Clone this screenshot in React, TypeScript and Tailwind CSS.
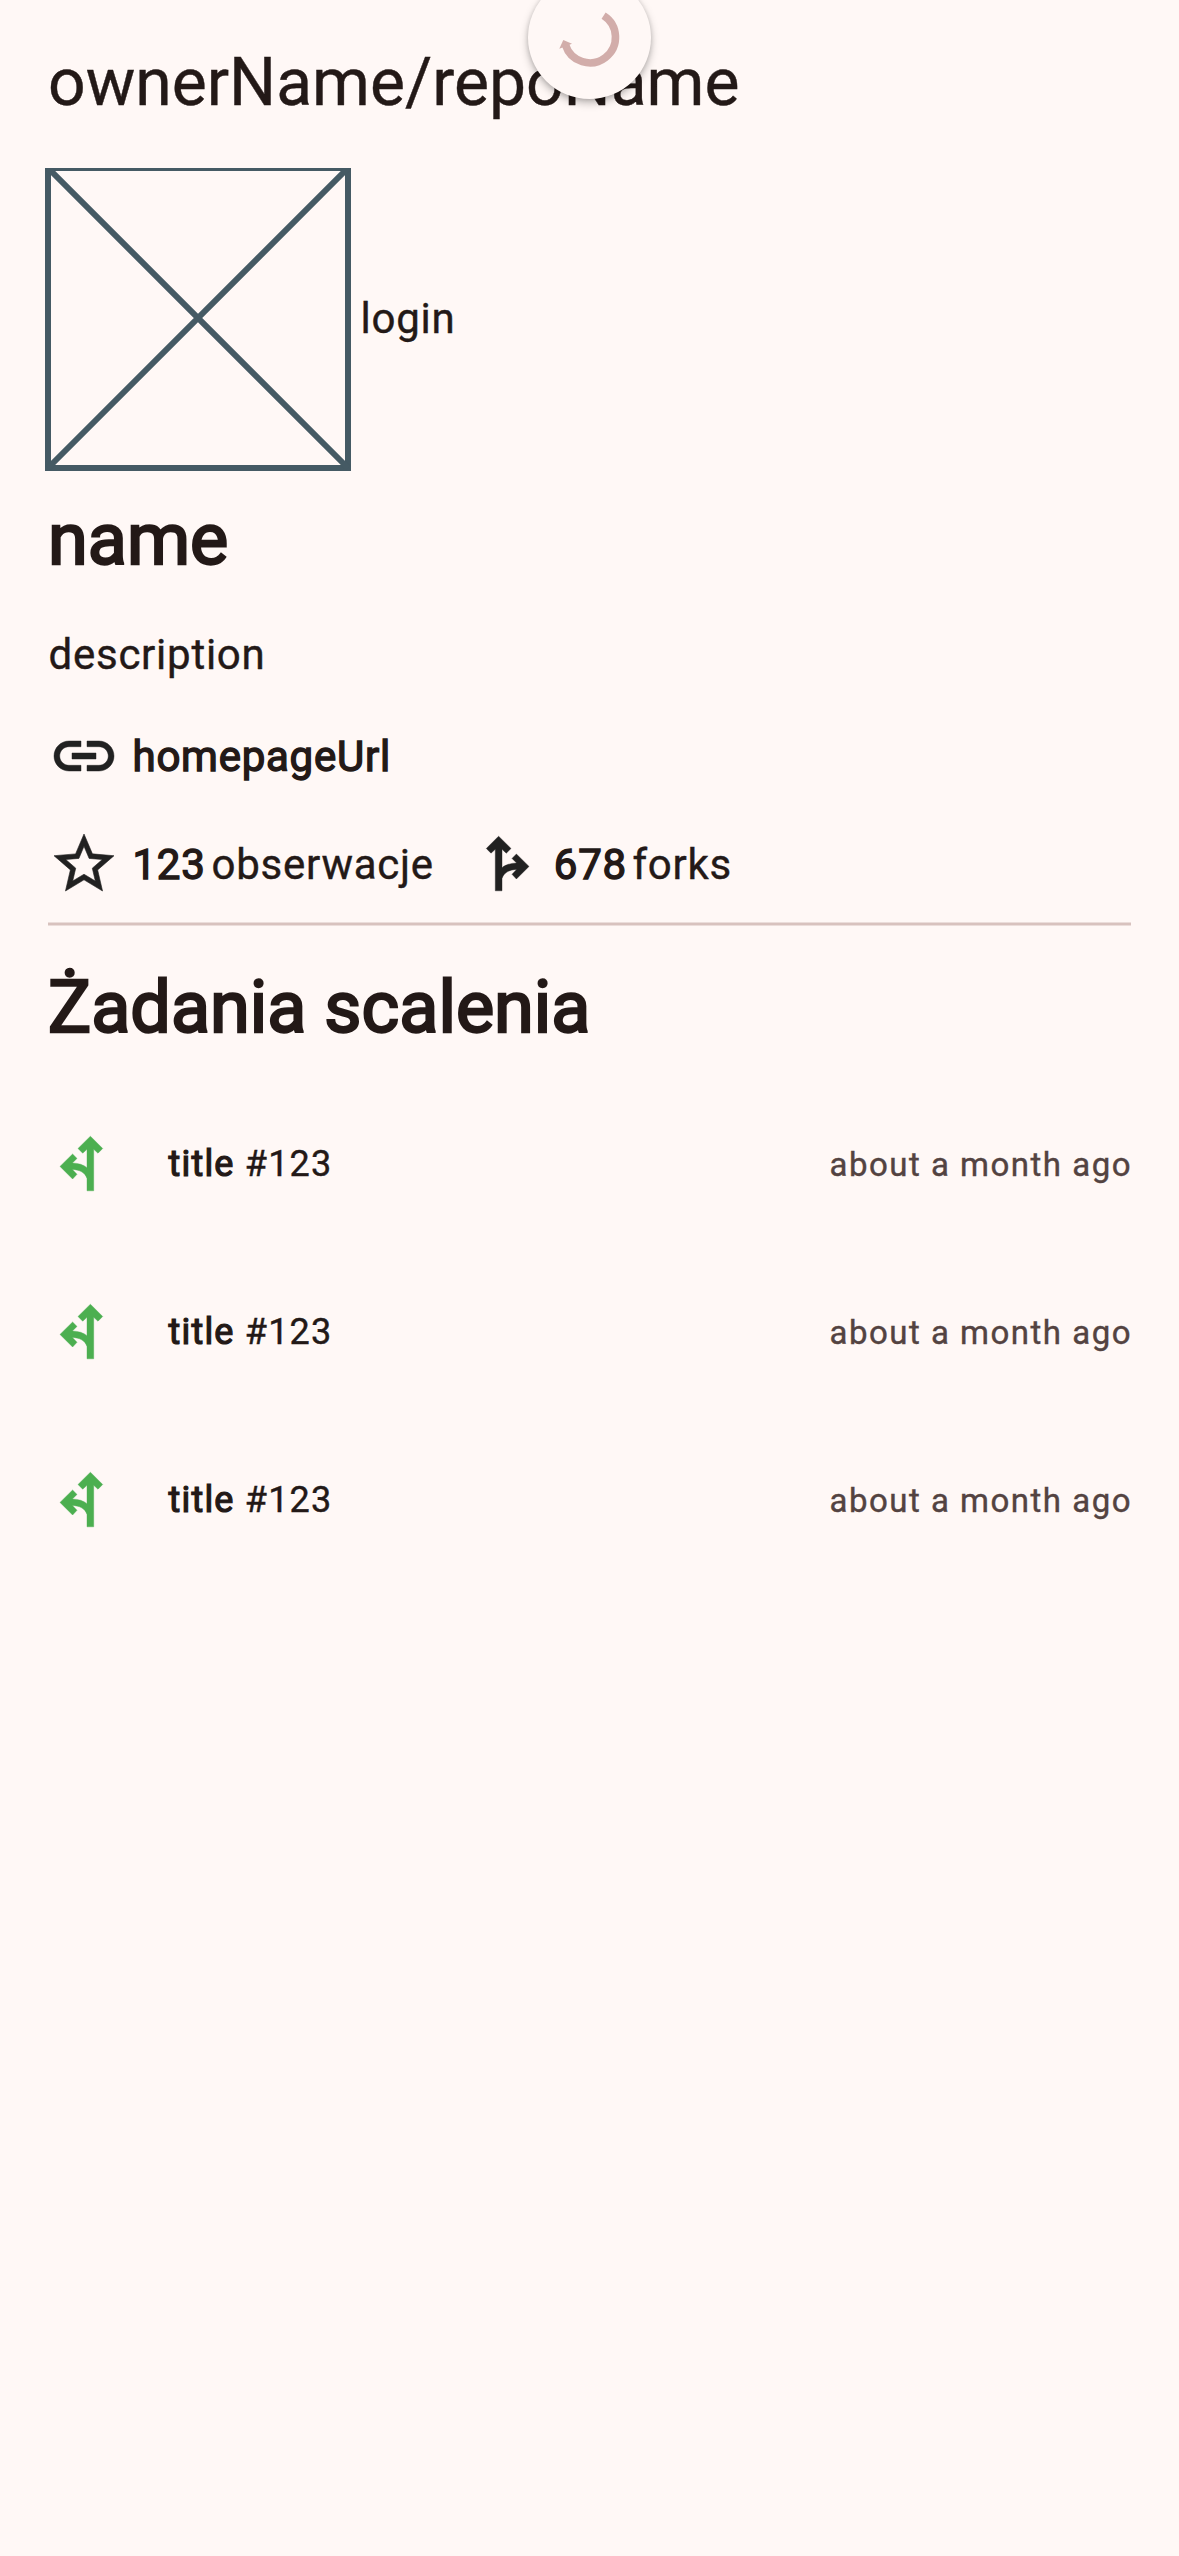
import React from "react";

const pullRequests = [
  { title: "title", number: "#123", updated: "about a month ago" },
  { title: "title", number: "#123", updated: "about a month ago" },
  { title: "title", number: "#123", updated: "about a month ago" },
];

function AvatarPlaceholder() {
  return (
    <svg className="h-[303px] w-[306px] shrink-0" viewBox="-3 0 306 303" fill="none" stroke="#455a64" strokeWidth="6">
      <rect x="0" y="0" width="300" height="300" />
      <path d="M0 0L300 300M300 0L0 300" />
    </svg>
  );
}

function LinkIcon({ className }: { className?: string }) {
  return (
    <svg className={className} viewBox="0 0 24 24" fill="currentColor" stroke="currentColor" strokeWidth="0.15">
      <path d="M3.9 12c0-1.71 1.39-3.1 3.1-3.1h4V7H7c-2.76 0-5 2.24-5 5s2.24 5 5 5h4v-1.9H7c-1.71 0-3.1-1.39-3.1-3.1zM8 13h8v-2H8v2zm9-6h-4v1.9h4c1.71 0 3.1 1.39 3.1 3.1s-1.39 3.1-3.1 3.1h-4V17h4c2.76 0 5-2.24 5-5s-2.24-5-5-5z" />
    </svg>
  );
}

function StarIcon({ className }: { className?: string }) {
  return (
    <svg className={className} viewBox="0 0 24 24" fill="currentColor" stroke="currentColor" strokeWidth="0.2" strokeLinejoin="bevel">
      <path d="M22 9.24l-7.19-.62L12 2 9.19 8.63 2 9.24l5.46 4.73L5.82 21 12 17.27 18.18 21l-1.63-7.03L22 9.24zM12 15.4l-3.76 2.27 1-4.28-3.32-2.88 4.38-.38L12 6.1l1.71 4.04 4.38.38-3.32 2.88 1 4.28L12 15.4z" />
    </svg>
  );
}

function ForkIcon({ className }: { className?: string }) {
  return (
    <svg className={className} viewBox="0 0 72 72" fill="currentColor" stroke="currentColor" strokeWidth="0.4">
      <path d="M29.6 8.2L17.3 20.5L22 25.2L26.3 21.3V62.8H33V50.5C35 44.5 40.5 41.7 47.6 41.5L43 46.3L47.4 51L60 38.4L47.4 26L43 30.4L47.6 35C41.5 35.2 36.5 36.7 33 39.7V21.3L37.3 25.2L42 20.5Z" />
    </svg>
  );
}

function RefreshIndicator() {
  return (
    <div className="absolute -top-6 left-[528px] h-[123px] w-[123px] rounded-full bg-[#fff8f6] shadow-[0_4px_8px_rgba(0,0,0,0.26),0_1px_4px_rgba(0,0,0,0.12)]">
      <svg className="h-full w-full" viewBox="0 0 123 123">
        <path d="M75.6 39.6A25.6 25.6 0 1 1 37.5 69" fill="none" stroke="#d2adaa" strokeWidth="7.6" />
        <path d="M31.3 72.7L35.3 64L44 67.7Z" fill="#d2adaa" />
      </svg>
    </div>
  );
}

export default function App() {
  return (
    <div className="relative h-[2556px] w-[1179px] overflow-hidden bg-[#fff8f6] font-['Roboto',sans-serif] text-[42px] leading-[60px] tracking-[0.75px] text-[#231917] [-webkit-text-stroke:0.4px_currentColor]">
      <header className="flex h-[166px] items-center px-12">
        <h1 className="text-[66px] leading-[84px] tracking-normal">ownerName/repoName</h1>
      </header>
      <RefreshIndicator />
      <main className="px-12 pt-0.5">
        <div className="-ml-[3px] flex h-[300px] items-start">
          <AvatarPlaceholder />
          <span className="ml-[9.5px] self-center pt-0.5">login</span>
        </div>
        <h2 className="mt-6 text-[72px] leading-24 tracking-normal [-webkit-text-stroke:2.4px_currentColor]">name</h2>
        <p className="mt-[37px] pl-[0.5px]">description</p>
        <div className="mt-[35px] flex h-[72px] items-center">
          <LinkIcon className="size-[72px] text-[#212121]" />
          <span className="ml-[12.5px] pt-px [-webkit-text-stroke:1.4px_currentColor]">homepageUrl</span>
        </div>
        <div className="mt-9 flex h-[72px] items-center">
          <StarIcon className="size-[72px] text-[#212121]" />
          <span className="ml-[12.5px] pt-0.5 [-webkit-text-stroke:1.4px_currentColor]">123</span>
          <span className="ml-[6px] pt-0.5">obserwacje</span>
          <ForkIcon className="ml-[35.5px] size-[72px] text-[#212121]" />
          <span className="ml-[12.5px] pt-0.5 [-webkit-text-stroke:1.4px_currentColor]">678</span>
          <span className="ml-[5.5px] pt-0.5">forks</span>
        </div>
        <div className="mt-[22px] h-1 border-y border-[#ebddda] bg-[#d8c2be]" />
        <h2 className="mt-[34px] text-[72px] leading-24 tracking-normal [-webkit-text-stroke:2.4px_currentColor]">Żadania scalenia</h2>
        <ul className="mt-6">
          {pullRequests.map((pr, i) => (
            <li key={i} className="flex h-[168px] items-center">
              <ForkIcon className="size-[72px] -scale-x-100 text-[#4caf50]" />
              <p className="ml-12 flex-1 pl-[0.5px] text-[36px] leading-12 tracking-[1.2px]">
                <span className="[-webkit-text-stroke:1.2px_currentColor]">{pr.title}</span> {pr.number}
              </p>
              <time className="-mr-px pt-px text-[33px] leading-12 tracking-[1.5px] text-[#534341]">{pr.updated}</time>
            </li>
          ))}
        </ul>
      </main>
    </div>
  );
}
